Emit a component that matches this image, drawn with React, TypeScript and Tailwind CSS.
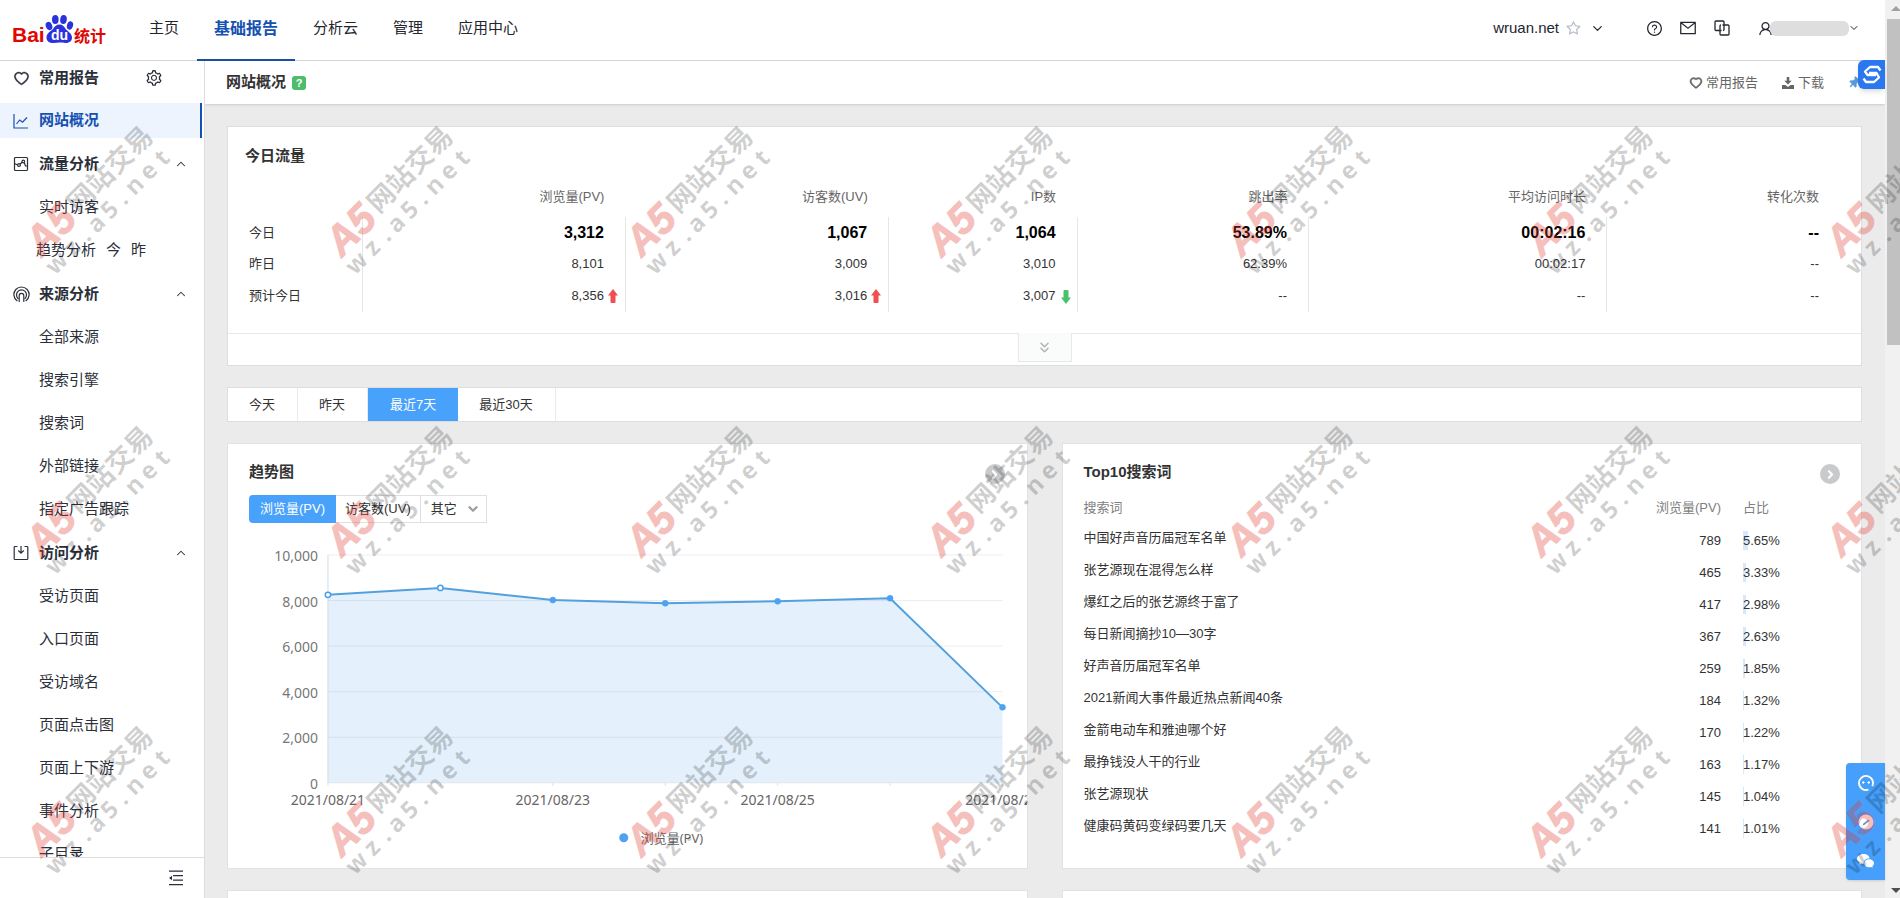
import { useState } from "react";
import type { ReactNode } from "react";
import { ChevronDown, ChevronRight, ChevronUp, ChevronsDown } from "lucide-react";
import {
  AiOutlineHeart,
  AiOutlineMail,
  AiOutlineQuestionCircle,
  AiOutlineSetting,
  AiOutlineStar,
  AiOutlineUser,
} from "react-icons/ai";
import { FaThumbtack } from "react-icons/fa";

const topNav = ["主页", "基础报告", "分析云", "管理", "应用中心"];

const stats = [
  { name: "浏览量(PV)", today: "3,312", yesterday: "8,101", expected: "8,356", trend: "up" },
  { name: "访客数(UV)", today: "1,067", yesterday: "3,009", expected: "3,016", trend: "up" },
  { name: "IP数", today: "1,064", yesterday: "3,010", expected: "3,007", trend: "down" },
  { name: "跳出率", today: "53.89%", yesterday: "62.39%", expected: "--", trend: "" },
  { name: "平均访问时长", today: "00:02:16", yesterday: "00:02:17", expected: "--", trend: "" },
  { name: "转化次数", today: "--", yesterday: "--", expected: "--", trend: "" },
];

const keywords = [
  { word: "中国好声音历届冠军名单", pv: 789, ratio: 5.65 },
  { word: "张艺源现在混得怎么样", pv: 465, ratio: 3.33 },
  { word: "爆红之后的张艺源终于富了", pv: 417, ratio: 2.98 },
  { word: "每日新闻摘抄10—30字", pv: 367, ratio: 2.63 },
  { word: "好声音历届冠军名单", pv: 259, ratio: 1.85 },
  { word: "2021新闻大事件最近热点新闻40条", pv: 184, ratio: 1.32 },
  { word: "金箭电动车和雅迪哪个好", pv: 170, ratio: 1.22 },
  { word: "最挣钱没人干的行业", pv: 163, ratio: 1.17 },
  { word: "张艺源现状", pv: 145, ratio: 1.04 },
  { word: "健康码黄码变绿码要几天", pv: 141, ratio: 1.01 },
];

const pvByDay = [8250, 8556, 8020, 7880, 7965, 8101, 3312];

const Logo = () => (
  <a href="#" aria-label="Baidu 统计" className="block">
    <svg width="98" height="32" viewBox="0 0 98 32">
      <text x="0" y="28" fontSize="21" fontWeight="700" fill="#e10602" fontFamily="Liberation Sans, sans-serif">Bai</text>
      <g fill="#2a32dd">
        <ellipse cx="37" cy="12" rx="3.200" ry="4.200" transform="rotate(-20 37 12)" />
        <ellipse cx="43.300" cy="5.500" rx="3.300" ry="4.500" />
        <ellipse cx="51.500" cy="5.500" rx="3.300" ry="4.500" transform="rotate(8 51.500 5.500)" />
        <ellipse cx="58" cy="11.500" rx="3" ry="4.200" transform="rotate(18 58 11.500)" />
        <path d="M47.500 10.500c3 0 4.500 2 6 4.200 1.800 2.500 6.500 4.300 6.500 8.800 0 4.200-3.200 5.500-6.500 5.500-2.300 0-4-.4-6-.4s-3.800.4-6 .4c-3.500 0-7-1.400-7-5.600 0-4.500 4.600-6.200 6.700-8.700 1.600-2.200 3.300-4.200 6.300-4.200z" />
      </g>
      <text x="39" y="26" fontSize="14" fontWeight="700" fill="#fff" fontFamily="Liberation Sans, sans-serif">du</text>
      <text x="62" y="28" fontSize="16" fontWeight="700" fill="#e10602" fontFamily="Noto Sans CJK SC, sans-serif">统计</text>
    </svg>
  </a>
);

const LineChartIcon = () => (
  <svg width="16" height="16" viewBox="0 0 16 16" fill="none" stroke="currentColor" strokeWidth="1.200">
    <path d="M1 1v14h14M3.500 11l3.200-4 2.800 2.200L14 4.500" />
  </svg>
);

const FlowIcon = () => (
  <svg width="16" height="16" viewBox="0 0 16 16" fill="none" stroke="currentColor" strokeWidth="1.200">
    <rect x="1.500" y="1.500" width="13" height="13" rx="1" />
    <path d="M1.500 7.500 4.600 9M7.200 8l2-1.700M11.200 6.500l1.300 3.500h2" />
    <circle cx="6" cy="9" r="1.400" />
    <circle cx="10.300" cy="5.500" r="1.300" />
  </svg>
);

const SourceIcon = () => (
  <svg width="17" height="17" viewBox="0 0 17 17" fill="none" stroke="currentColor" strokeWidth="1.200" strokeLinecap="round">
    <path d="M4 14.700a7.600 7.600 0 1 1 9 0" />
    <path d="M5 12.500a5 5 0 1 1 7 0" />
    <path d="M6.200 15.500v-5.800a2.300 2.300 0 0 1 4.600 0v5.800" />
  </svg>
);

const VisitIcon = () => (
  <svg width="16" height="16" viewBox="0 0 16 16" fill="none" stroke="currentColor" strokeWidth="1.200">
    <path d="M4.500 1.500H2A.8.8 0 0 0 1.200 2.300v11.400a.8.8 0 0 0 .8.8h12a.8.8 0 0 0 .8-.8V2.300a.8.8 0 0 0-.8-.8h-2.500M8 1v7M5.300 5.500 8 8.200l2.700-2.700" />
  </svg>
);

const CopyIcon = () => (
  <svg width="16" height="16" viewBox="0 0 16 16" fill="none" stroke="currentColor" strokeWidth="1.300">
    <path d="M7.500 10.500h-5.500a1 1 0 0 1-1-1V2a1 1 0 0 1 1-1h7a1 1 0 0 1 1 1v7.500a1 1 0 0 1-1 1" />
    <path d="M8.500 5H14a1 1 0 0 1 1 1v8a1 1 0 0 1-1 1H7a1 1 0 0 1-1-1V6a1 1 0 0 1 1-1" />
  </svg>
);

const DownloadIcon = () => (
  <svg width="12" height="12" viewBox="0 0 12 12" fill="currentColor">
    <path d="M4.700 0h2.600v3.800h2.400L6 7.600 2.300 3.800h2.400zM0 8h3.400L6 10l2.600-2H12v4H0z" />
  </svg>
);

const FoldIcon = () => (
  <svg width="16" height="16" viewBox="0 0 16 16" fill="none" stroke="currentColor" strokeWidth="1.300">
    <path d="M1 1.200h14M5 5.700h10M5 10.200h10M1 14.700h14" />
    <path d="M4 5.800v4.400L1 8z" fill="currentColor" stroke="none" />
  </svg>
);

const Arrow = ({ trend }: { trend: string }) => (
  <svg
    width="10"
    height="14"
    viewBox="0 0 10 14"
    className={trend === "up" ? "absolute right-[7px] top-[9px] text-[#ef4f4f]" : "absolute right-[6px] top-[10px] rotate-180 text-[#47c26b]"}
  >
    <path d="M5 0l5 6.500H7.500V13q0 1-1 1h-3q-1 0-1-1V6.500H0z" fill="currentColor" />
  </svg>
);

const MenuGroup = ({ icon, title, items }: { icon: ReactNode; title: string; items: ReactNode[] }) => (
  <>
    <button className="flex h-9 w-full shrink-0 items-center pl-[13px] pr-4 text-left font-bold">
      <span className="w-[26px]">{icon}</span>
      <span className="flex-1">{title}</span>
      <ChevronUp size={14} strokeWidth={1.8} />
    </button>
    {items.map((item, i) => (
      <div key={i} className="flex h-[35px] shrink-0 items-center pl-[39px]">
        {item}
      </div>
    ))}
  </>
);

const Sidebar = () => (
  <aside className="flex w-[205px] shrink-0 flex-col border-r border-[#dcdcdc] bg-white text-[15px] text-[#2b2f3a]">
    <nav className="flex min-h-0 flex-1 flex-col gap-2 overflow-hidden">
      <div className="flex h-[34px] shrink-0 items-center pl-[13px] font-bold">
        <span className="w-[26px]"><AiOutlineHeart size={17} strokeWidth={25} /></span>
        <a href="#">常用报告</a>
        <button aria-label="设置" className="ml-[46px]"><AiOutlineSetting size={18} /></button>
      </div>
      <a href="#" className="mr-[2px] flex h-[35px] shrink-0 items-center border-r-2 border-[#1551b0] bg-[#edf4fe] pl-[13px] font-bold text-[#1551b0]">
        <span className="w-[26px]"><LineChartIcon /></span>
        网站概况
      </a>
      <MenuGroup
        icon={<FlowIcon />}
        title="流量分析"
        items={[
          <a href="#">实时访客</a>,
          <span className="-ml-[3px] flex gap-[10px]">
            <a href="#">趋势分析</a>
            <a href="#">今</a>
            <a href="#">昨</a>
          </span>,
        ]}
      />
      <MenuGroup
        icon={<SourceIcon />}
        title="来源分析"
        items={["全部来源", "搜索引擎", "搜索词", "外部链接", "指定广告跟踪"].map((t) => <a href="#">{t}</a>)}
      />
      <MenuGroup
        icon={<VisitIcon />}
        title="访问分析"
        items={["受访页面", "入口页面", "受访域名", "页面点击图", "页面上下游", "事件分析", "子目录"].map((t) => <a href="#">{t}</a>)}
      />
    </nav>
    <div className="flex h-[41px] shrink-0 items-center justify-end border-t border-[#dcdcdc] pr-5">
      <button aria-label="收起菜单"><FoldIcon /></button>
    </div>
  </aside>
);

const Header = () => (
  <header className="flex h-[61px] shrink-0 items-center border-b border-[#d4d4d4] bg-white text-[15px] text-[#23262f]">
    <div className="w-[132px] pl-3"><Logo /></div>
    <nav className="flex h-[61px] flex-1 gap-px">
      {topNav.map((item) => (
        <a
          key={item}
          href="#"
          className={
            item === "基础报告"
              ? "flex items-center border-b-2 border-[#1a4fa0] px-[17px] pb-px text-base font-bold text-[#1551b0]"
              : "flex items-center px-[17px] pb-[3px]"
          }
        >
          {item}
        </a>
      ))}
    </nav>
    <div className="flex items-center pb-1 pr-[25px]">
      <span>wruan.net</span>
      <AiOutlineStar size={17} className="ml-[6px] text-[#b4bccb]" />
      <ChevronDown size={15} strokeWidth={2} className="ml-[8px]" />
      <button aria-label="帮助" className="ml-[41px]"><AiOutlineQuestionCircle size={17} /></button>
      <button aria-label="消息" className="ml-[16px]"><AiOutlineMail size={18} /></button>
      <button aria-label="切换" className="ml-[17px]"><CopyIcon /></button>
      <button aria-label="账号" className="ml-[27px] flex items-center">
        <AiOutlineUser size={17} />
        <span className="-ml-1 h-[15px] w-[79px] rounded-md bg-[#dedede]" />
        <ChevronDown size={12} strokeWidth={2} className="-ml-px" />
      </button>
    </div>
  </header>
);

const TodayTraffic = () => (
  <section className="border border-[#dedede] bg-white">
    <h2 className="h-[50px] px-[17px] pt-[18px] text-[15px] font-bold leading-[22px]">今日流量</h2>
    <div className="pl-4 pr-[21px]">
      <table className="w-full table-fixed text-right text-[13px]">
        <colgroup>
          <col className="w-[7.400%]" />
          <col className="w-[16.500%]" />
          <col className="w-[16.500%]" />
          <col className="w-[11.800%]" />
          <col className="w-[14.500%]" />
          <col className="w-[18.700%]" />
          <col className="w-[14.600%]" />
        </colgroup>
        <thead>
          <tr className="h-10 text-[#666]">
            <td />
            {stats.map((s) => (
              <th key={s.name} className="pr-[21px] font-normal">{s.name}</th>
            ))}
          </tr>
        </thead>
        <tbody>
          <tr className="h-[31px]">
            <th className="border-r border-[#e6e6e6] pl-[5px] text-left font-normal">今日</th>
            {stats.map((s) => (
              <td key={s.name} className="border-r border-[#e6e6e6] pr-[21px] text-base font-bold text-black last:border-0">{s.today}</td>
            ))}
          </tr>
          <tr className="h-8">
            <th className="border-r border-[#e6e6e6] pl-[5px] text-left font-normal">昨日</th>
            {stats.map((s) => (
              <td key={s.name} className="border-r border-[#e6e6e6] pr-[21px] last:border-0">{s.yesterday}</td>
            ))}
          </tr>
          <tr className="h-8">
            <th className="border-r border-[#e6e6e6] pl-[5px] text-left font-normal">预计今日</th>
            {stats.map((s) => (
              <td key={s.name} className="relative border-r border-[#e6e6e6] pr-[21px] last:border-0">
                {s.expected}
                {s.trend && <Arrow trend={s.trend} />}
              </td>
            ))}
          </tr>
        </tbody>
      </table>
    </div>
    <div className="mt-[21px] flex h-8 justify-center border-t border-[#e8e8e8]">
      <button aria-label="展开" className="-mt-px flex h-[29px] w-[54px] items-center justify-center border border-t-0 border-[#e8e8e8] bg-[#fafbfb] text-[#b0b0b0]">
        <ChevronsDown size={17} strokeWidth={2} />
      </button>
    </div>
  </section>
);

const RangeTabs = () => {
  const [range, setRange] = useState("最近7天");
  return (
    <div className="flex h-[35px] border border-[#dedede] bg-white text-[13px]">
      {["今天", "昨天", "最近7天", "最近30天"].map((r) => (
        <button
          key={r}
          onClick={() => setRange(r)}
          className={r === range ? "bg-[#48a1fb] px-[22px] text-white" : "border-r border-[#ebebeb] pl-[21px] pr-[22px]"}
        >
          {r}
        </button>
      ))}
    </div>
  );
};

const TrendChart = () => {
  const zero = 260;
  const points = pvByDay.map((v, i) => ({ x: 100 + i * 112.5, y: zero - (v * 228) / 10000 }));
  const line = points.map((p) => `${p.x},${p.y}`).join(" ");
  return (
    <svg viewBox="0 0 799 345" className="block w-full" fontFamily="Noto Sans, Noto Sans CJK SC, sans-serif">
      {[0, 2000, 4000, 6000, 8000, 10000].map((v) => {
        const y = zero - (v * 228) / 10000;
        return (
          <g key={v}>
            <line x1="100" x2="775" y1={y} y2={y} stroke="#ededed" />
            <text x="90" y={y + 6} textAnchor="end" fontSize="14" fill="#777">{v.toLocaleString("en-US")}</text>
          </g>
        );
      })}
      <polygon points={`100,${zero} ${line} 775,${zero}`} fill="#4a9fe8" fillOpacity="0.150" />
      <line x1="100" x2="100" y1="32" y2={zero} stroke="#d5dbe2" />
      <polyline points={line} fill="none" stroke="#53a0de" strokeWidth="2" />
      {points.map((p, i) => (
        <g key={i}>
          <line x1={p.x} x2={p.x} y1={zero} y2={zero + 3} stroke="#e2e2e2" />
          <circle cx={p.x} cy={p.y} r={i < 2 ? 2.7 : 3} fill={i < 2 ? "#fff" : "#4da3f2"} stroke="#4a9fe8" strokeWidth={i < 2 ? 1.5 : 0.5} />
        </g>
      ))}
      {[21, 23, 25, 27].map((d, i) => (
        <text key={d} x={100 + i * 225} y="282" textAnchor="middle" fontSize="14" fill="#666">{`2021/08/${d}`}</text>
      ))}
      <circle cx="396" cy="315" r="4.500" fill="#4da3f2" />
      <text x="413" y="320" fontSize="13" fill="#666">浏览量(PV)</text>
    </svg>
  );
};

const MoreLink = () => (
  <a href="#" aria-label="更多" className="mt-[20px] flex size-5 items-center justify-center rounded-full bg-[#c8cacc] text-white">
    <ChevronRight size={13} strokeWidth={4} />
  </a>
);

const TrendCard = () => (
  <section className="h-[426px] min-w-0 overflow-hidden border border-[#e2e2e2] bg-white">
    <div className="flex h-12 justify-between pl-[21px] pr-[22px]">
      <h2 className="pt-[17px] text-[15px] font-bold leading-[22px]">趋势图</h2>
      <MoreLink />
    </div>
    <div className="ml-[21px] mt-[3px] flex h-7 text-[13px]">
      <button className="rounded-l-sm bg-[#48a1fb] px-[11px] text-white">浏览量(PV)</button>
      <button className="border border-l-0 border-[#e0e0e0] px-[9px]">访客数(UV)</button>
      <label className="relative border border-l-0 border-[#e0e0e0]">
        <select aria-label="其它指标" className="h-full w-[65px] appearance-none bg-transparent pl-[10px] outline-none">
          <option>其它</option>
        </select>
        <ChevronDown size={14} strokeWidth={4} className="pointer-events-none absolute right-[6px] top-[6px] text-[#a0a0a0]" />
      </label>
    </div>
    <TrendChart />
  </section>
);

const KeywordsCard = () => (
  <section className="h-[426px] min-w-0 border border-[#e2e2e2] bg-white px-[21px]">
    <div className="flex h-12 justify-between">
      <h2 className="pt-[17px] text-[15px] font-bold leading-[22px]">Top10搜索词</h2>
      <MoreLink />
    </div>
    <table className="w-full text-[13px]">
      <thead>
        <tr className="h-8 text-[#808080]">
          <th className="text-left font-normal">搜索词</th>
          <th className="pr-[22px] text-right font-normal">浏览量(PV)</th>
          <th className="w-[97px] text-left font-normal">占比</th>
        </tr>
      </thead>
      <tbody>
        {keywords.map((k) => (
          <tr key={k.word} className="h-8">
            <td className="pb-1">{k.word}</td>
            <td className="pr-[22px] pt-px text-right">{k.pv}</td>
            <td className="pt-px">
              <div className="relative">
                <span className="absolute inset-y-0 left-0 bg-[#d6e8fb]" style={{ width: `${k.ratio}%` }} />
                <span className="relative">{k.ratio.toFixed(2)}%</span>
              </div>
            </td>
          </tr>
        ))}
      </tbody>
    </table>
  </section>
);

const FloatingTools = () => (
  <div className="absolute bottom-[18px] right-[15px] flex h-[117px] w-[39px] flex-col items-center justify-around rounded-l-sm bg-[#459ffb] text-white shadow">
    <button aria-label="客服">
      <svg width="16" height="16" viewBox="0 0 16 16" fill="none" stroke="currentColor" strokeWidth="1.800">
        <path d="M10.500 14.500a7 7 0 1 1 3.800-3.500" />
        <path d="M4 7.500h2.600M9.400 7.500H12M5.300 6.200v2.600M10.700 6.200v2.600" strokeWidth="1.200" />
      </svg>
    </button>
    <button aria-label="反馈">
      <svg width="16" height="16" viewBox="0 0 16 16">
        <circle cx="8" cy="8" r="7.500" fill="currentColor" />
        <path d="M4.500 11.500l1-2 5-4 1 1.200-5 4z" fill="#5b8fd0" />
      </svg>
    </button>
    <button aria-label="微信">
      <svg width="17" height="14" viewBox="0 0 17 14" fill="currentColor">
        <path d="M6.500 0C10 0 12.500 2 12.500 4.500h-.5C8.500 4.500 6.500 6.500 6.800 9.800c-.8.1-1.600 0-2.300-.2L2 10.800l.6-2C1 7.700 0 6.300 0 4.800 0 2.100 3 0 6.500 0z" />
        <path d="M12 5.300c2.800 0 5 1.700 5 4 0 1.200-.6 2.200-1.600 3l.3 1.500-1.700-.8c-.6.200-1.300.3-2 .3-2.800 0-4.800-1.700-4.800-4s2-4 4.800-4z" />
      </svg>
    </button>
  </div>
);

const Scrollbar = () => (
  <div className="flex w-[15px] shrink-0 flex-col justify-between bg-[#f1f1f1] pl-[2px]">
    <div>
      <svg width="13" height="19" viewBox="0 0 13 19"><path d="M4 11l5-5 5 5z" fill="#a0a0a0" /></svg>
      <div className="h-[326px] bg-[#c1c1c1]" />
    </div>
    <svg width="13" height="17" viewBox="0 0 13 17"><path d="M4 7l5 5 5-5z" fill="#505050" /></svg>
  </div>
);

// One stamp every 300px in both directions
const Watermark = () => (
  <svg className="pointer-events-none absolute inset-0 h-full w-full" aria-hidden="true" fontWeight="700">
    {[0, 300, 600].map((y) =>
      [0, 300, 600, 900, 1200, 1500, 1800].map((x) => (
        <g key={`${x}-${y}`} transform={`translate(${x} ${y}) rotate(-45)`}>
          <text x="-153" y="212" fontSize="41" fontStyle="italic" fill="#e23a30" stroke="#e23a30" strokeWidth="1" opacity="0.320" fontFamily="Liberation Sans, sans-serif">A5</text>
          <g fill="#000" fillOpacity="0.190">
            <text x="-96" y="207" fontSize="27" fontFamily="Noto Sans CJK SC, sans-serif">网站交易</text>
            <text x="-146 -124 -106 -90 -71 -54 -36 -16 3" y="234" fontSize="24" textAnchor="middle" fontFamily="Noto Sans, sans-serif">wz.a5.net</text>
          </g>
        </g>
      ))
    )}
  </svg>
);

const App = () => (
  <div className="relative flex h-screen overflow-hidden font-['Liberation_Sans','Noto_Sans_CJK_SC',sans-serif] text-[#333]">
    <div className="flex min-w-0 flex-1 flex-col">
      <Header />
      <div className="flex min-h-0 flex-1">
        <Sidebar />
        <main className="flex min-w-0 flex-1 flex-col overflow-hidden bg-[#ebebeb]">
          <div className="flex h-[43px] shrink-0 items-center bg-white pl-[21px] pr-[25px] text-[13px] text-[#666] shadow-sm">
            <h1 className="text-[15px] font-bold text-[#333]">网站概况</h1>
            <button aria-label="说明" className="ml-[6px] size-[14px] rounded-[3px] bg-[#4dbd6c] text-[11px] font-bold leading-[14px] text-white">?</button>
            <button className="ml-auto flex items-center gap-[3px]">
              <AiOutlineHeart size={14} strokeWidth={60} />
              常用报告
            </button>
            <button className="ml-6 flex items-center gap-1">
              <DownloadIcon />
              下载
            </button>
            <button aria-label="固定" className="ml-6"><FaThumbtack size={12} className="rotate-45 text-[#5b9bdc]" /></button>
          </div>
          <div className="flex flex-col gap-[21px] py-[22px] pl-[22px] pr-[23px]">
            <TodayTraffic />
            <RangeTabs />
            <div className="grid grid-cols-2 gap-x-[34px] gap-y-[21px]">
              <TrendCard />
              <KeywordsCard />
              <section className="h-40 border border-[#e2e2e2] bg-white" />
              <section className="h-40 border border-[#e2e2e2] bg-white" />
            </div>
          </div>
        </main>
      </div>
    </div>
    <Scrollbar />
    <button aria-label="扩展工具" className="absolute right-[15px] top-[60px] flex h-[29px] w-[27px] items-center justify-center rounded-l-md bg-[#2b77f0] text-white shadow-md">
      <svg width="20" height="19" viewBox="0 0 20 19" fill="none" stroke="currentColor" strokeWidth="2.300" strokeLinejoin="round">
        <path d="M18.500 5.500 16 2H8L3 6.500 5.500 10H14" />
        <path d="M1.500 13.500 4 17h8l5-4.500L14.500 8H7" />
      </svg>
    </button>
    <FloatingTools />
    <Watermark />
  </div>
);

export default App;
